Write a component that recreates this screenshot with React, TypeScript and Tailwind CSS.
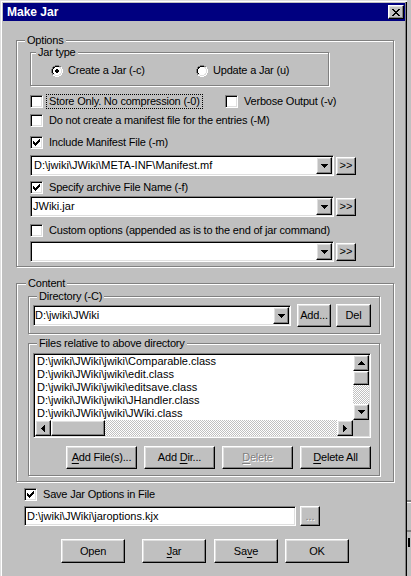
import React from "react";

type PixProps = { rows: string[]; colors: Record<string, string> };
function Pix({ rows, colors }: PixProps) {
  const h = rows.length;
  const w = rows[0].length;
  const rects: React.ReactNode[] = [];
  rows.forEach((r, y) => {
    r.split("").forEach((c, x) => {
      const fill = colors[c];
      if (fill) rects.push(<rect key={`${x}-${y}`} x={x} y={y} width={1} height={1} fill={fill} />);
    });
  });
  return (
    <svg width={w} height={h} viewBox={`0 0 ${w} ${h}`} shapeRendering="crispEdges" className="block shrink-0">
      {rects}
    </svg>
  );
}

const K = { X: "#000" };
const GRAYK = { X: "#808080" };
const CHECK = ["......X", ".....XX", "X...XXX", "XX.XXX.", "XXXXX..", ".XXX...", "..X...."];
const CLOSE = ["XX....XX", ".XX..XX.", "..XXXX..", "...XX...", "..XXXX..", ".XX..XX.", "XX....XX"];
const DOWN = ["XXXXXXX", ".XXXXX.", "..XXX..", "...X..."];
const UP = ["...X...", "..XXX..", ".XXXXX.", "XXXXXXX"];
const RIGHT = ["X...", "XX..", "XXX.", "XXXX", "XXX.", "XX..", "X..."];
const LEFT = ["...X", "..XX", ".XXX", "XXXX", ".XXX", "..XX", "...X"];
const RADIO_BASE = [
  "....DDDD....",
  "..DDBBBBDD..",
  ".DBBwwwwLLW.",
  ".DBwwwwwwLW.",
  "DBwwwwwwwwLW",
  "DBwwwwwwwwLW",
  "DBwwwwwwwwLW",
  "DBwwwwwwwwLW",
  ".DBwwwwwwLW.",
  ".DLLwwwwLLW.",
  "..WWLLLLWW..",
  "....WWWW....",
];
const RADIO_ON = RADIO_BASE.map((r, y) => {
  const a = r.split("");
  if (y === 4 || y === 7) {
    a[5] = "k";
    a[6] = "k";
  }
  if (y === 5 || y === 6) {
    a[4] = "k";
    a[5] = "k";
    a[6] = "k";
    a[7] = "k";
  }
  return a.join("");
});
const RADIO_COLORS = { D: "#808080", B: "#000", W: "#fff", L: "#dfdfdf", w: "#fff", k: "#000" };

const RAISED =
  "bg-[#c0c0c0] border border-t-white border-l-white border-r-black border-b-black shadow-[inset_-1px_-1px_0_#808080,inset_1px_1px_0_#dfdfdf]";
const SUNKEN =
  "bg-white border border-t-[#808080] border-l-[#808080] border-r-white border-b-white shadow-[inset_1px_1px_0_#000,inset_-1px_-1px_0_#dfdfdf]";
const ETCHED = "relative border border-[#808080] shadow-[inset_1px_1px_0_#fff,1px_1px_0_#fff]";
const DITHER =
  "bg-[image:repeating-conic-gradient(#c0c0c0_0%_25%,#ffffff_0%_50%)] bg-[length:2px_2px]";

function Btn({ className, children }: { className: string; children?: React.ReactNode }) {
  return <div className={`${RAISED} flex items-center justify-center shrink-0 ${className}`}>{children}</div>;
}

function Checkbox({ checked }: { checked?: boolean }) {
  return (
    <div className={`${SUNKEN} w-[13px] h-[13px] shrink-0 flex items-center justify-center`}>
      {checked && <Pix rows={CHECK} colors={K} />}
    </div>
  );
}

function CheckRow({
  checked,
  label,
  focus,
  className,
}: {
  checked?: boolean;
  label: string;
  focus?: boolean;
  className?: string;
}) {
  return (
    <div className={`flex items-center h-[13px] ${className ?? ""}`}>
      <Checkbox checked={checked} />
      <span
        className={`ml-[4px] px-[2px] leading-[13px] whitespace-nowrap ${
          focus ? "outline-1 outline-dotted outline-black" : ""
        }`}
      >
        {label}
      </span>
    </div>
  );
}

function Combo({ value, className, textPad }: { value: string; className: string; textPad: string }) {
  return (
    <div className={`${SUNKEN} h-[21px] p-[1px] flex items-center shrink-0 ${className}`}>
      <span className={`flex-1 whitespace-nowrap overflow-hidden tracking-normal leading-[13px] ${textPad}`}>
        {value}
      </span>
      <Btn className="w-[16px] h-[17px]">
        <Pix rows={DOWN} colors={K} />
      </Btn>
    </div>
  );
}

function Group({
  className,
  label,
  labelPos,
  children,
}: {
  className: string;
  label: string;
  labelPos: string;
  children?: React.ReactNode;
}) {
  return (
    <div className={`${ETCHED} flex flex-col shrink-0 ${className}`}>
      <span className={`absolute top-[-7px] px-[2px] bg-[#c0c0c0] leading-[13px] whitespace-nowrap ${labelPos}`}>
        {label}
      </span>
      {children}
    </div>
  );
}

function Radio({ on, label, className }: { on?: boolean; label: string; className: string }) {
  return (
    <div className={`flex items-center h-[13px] ${className}`}>
      <Pix rows={on ? RADIO_ON : RADIO_BASE} colors={RADIO_COLORS} />
      <span className="ml-[5px] leading-[13px] whitespace-nowrap">{label}</span>
    </div>
  );
}

const FILES = [
  "D:\\jwiki\\JWiki\\jwiki\\Comparable.class",
  "D:\\jwiki\\JWiki\\jwiki\\edit.class",
  "D:\\jwiki\\JWiki\\jwiki\\editsave.class",
  "D:\\jwiki\\JWiki\\jwiki\\JHandler.class",
  "D:\\jwiki\\JWiki\\jwiki\\JWiki.class",
];

export default function App() {
  return (
    <div className="w-[411px] h-[576px] overflow-hidden bg-[#c0c0c0] flex font-['Liberation_Sans',Arial,sans-serif] text-[11px] leading-[13px] text-black tracking-[-0.2px]">
      {/* window */}
      <div className="w-[407px] h-full shrink-0 flex flex-col pl-[3px] pt-[3px] pr-[2px] shadow-[inset_1px_1px_0_#dfdfdf,inset_2px_2px_0_#fff,inset_-1px_0_0_#000,inset_-2px_0_0_#808080]">
        {/* title bar */}
        <div className="h-[18px] shrink-0 bg-[#000080] flex items-center justify-between pl-[4px] pr-[1px]">
          <span className="text-white font-bold text-[12px] tracking-normal leading-[14px]">Make Jar</span>
          <Btn className="w-[16px] h-[14px]">
            <Pix rows={CLOSE} colors={K} />
          </Btn>
        </div>

        {/* client */}
        <div className="flex flex-col">
          {/* Options */}
          <Group className="mt-[19px] ml-[13px] w-[378px] h-[227px]" label="Options" labelPos="left-[8px]">
            <Group className="mt-[11px] ml-[13px] w-[299px] h-[34px]" label="Jar type" labelPos="left-[5px]">
              <div className="mt-[11px] flex">
                <Radio on label="Create a Jar (-c)" className="ml-[20px] w-[145px]" />
                <Radio label="Update a Jar (u)" className="" />
              </div>
            </Group>

            <div className="mt-[9px] ml-[13px] flex">
              <CheckRow label="Store Only. No compression (-0)" focus className="w-[195px]" />
              <CheckRow label="Verbose Output (-v)" />
            </div>
            <CheckRow className="mt-[6px] ml-[13px]" label="Do not create a manifest file for the entries (-M)" />
            <CheckRow className="mt-[9px] ml-[13px]" checked label="Include Manifest File (-m)" />
            <div className="mt-[6px] ml-[13px] flex items-center">
              <Combo className="w-[304px]" textPad="pl-[2px]" value={"D:\\jwiki\\JWiki\\META-INF\\Manifest.mf"} />
              <Btn className="ml-[2px] w-[20px] h-[18px]">
                <span className="tracking-normal leading-[13px]">&gt;&gt;</span>
              </Btn>
            </div>
            <CheckRow className="mt-[5px] ml-[13px]" checked label="Specify archive File Name (-f)" />
            <div className="mt-[2px] ml-[13px] flex items-center">
              <Combo className="w-[304px]" textPad="pl-[1px]" value="JWiki.jar" />
              <Btn className="ml-[2px] w-[20px] h-[18px]">
                <span className="tracking-normal leading-[13px]">&gt;&gt;</span>
              </Btn>
            </div>
            <CheckRow
              className="mt-[7px] ml-[13px]"
              label="Custom options (appended as is to the end of jar command)"
            />
            <div className="mt-[4px] ml-[13px] flex items-center">
              <Combo className="w-[304px]" textPad="pl-[2px]" value="" />
              <Btn className="ml-[2px] w-[20px] h-[18px]">
                <span className="tracking-normal leading-[13px]">&gt;&gt;</span>
              </Btn>
            </div>
          </Group>

          {/* Content */}
          <Group className="mt-[16px] ml-[13px] w-[378px] h-[199px]" label="Content" labelPos="left-[9px]">
            <Group className="mt-[12px] ml-[11px] w-[352px] h-[38px]" label="Directory (-C)" labelPos="left-[8px]">
              <div className="mt-[7px] ml-[4px] h-[23px] flex items-center">
                <Combo className="w-[258px]" textPad="pl-0" value={"D:\\jwiki\\JWiki"} />
                <Btn className="ml-[6px] w-[34px] h-[23px]">Add...</Btn>
                <Btn className="ml-[5px] w-[35px] h-[23px]">Del</Btn>
              </div>
            </Group>

            <Group
              className="mt-[9px] ml-[11px] w-[352px] h-[133px]"
              label="Files relative to above directory"
              labelPos="left-[8px]"
            >
              {/* list box */}
              <div className={`${SUNKEN} mt-[9px] ml-[4px] w-[338px] h-[85px] p-[1px] grid grid-cols-[1fr_16px] grid-rows-[1fr_16px]`}>
                <div className="flex flex-col overflow-hidden tracking-normal">
                  {FILES.map((f) => (
                    <div key={f} className="h-[13px] leading-[13px] pl-[2px] whitespace-nowrap">
                      {f}
                    </div>
                  ))}
                </div>
                <div className="flex flex-col">
                  <Btn className="w-[16px] h-[16px]">
                    <Pix rows={UP} colors={K} />
                  </Btn>
                  <Btn className="w-[16px] h-[14px]" />
                  <div className={`flex-1 ${DITHER}`} />
                  <Btn className="w-[16px] h-[16px]">
                    <Pix rows={DOWN} colors={K} />
                  </Btn>
                </div>
                <div className="flex">
                  <Btn className="w-[16px] h-[16px]">
                    <Pix rows={LEFT} colors={K} />
                  </Btn>
                  <Btn className="w-[54px] h-[16px]" />
                  <div className={`flex-1 ${DITHER}`} />
                  <Btn className="w-[16px] h-[16px]">
                    <Pix rows={RIGHT} colors={K} />
                  </Btn>
                </div>
                <div className="bg-[#c0c0c0]" />
              </div>

              <div className="mt-[8px] ml-[37px] flex gap-[7px]">
                <Btn className="w-[71px] h-[23px]">
                  <span className="whitespace-nowrap">
                    <span className="underline underline-offset-[2px]">A</span>dd File(s)...
                  </span>
                </Btn>
                <Btn className="w-[71px] h-[23px]">
                  <span className="whitespace-nowrap">
                    Add <span className="underline underline-offset-[2px]">D</span>ir...
                  </span>
                </Btn>
                <Btn className="w-[71px] h-[23px]">
                  <span className="whitespace-nowrap text-[#808080] [text-shadow:1px_1px_0_#fff]">
                    <span className="underline underline-offset-[2px]">D</span>elete
                  </span>
                </Btn>
                <Btn className="w-[71px] h-[23px]">
                  <span className="whitespace-nowrap">
                    <span className="underline underline-offset-[2px]">D</span>elete All
                  </span>
                </Btn>
              </div>
            </Group>
          </Group>

          {/* Save options */}
          <CheckRow className="mt-[6px] ml-[21px]" checked label="Save Jar Options in File" />
          <div className="mt-[5px] ml-[21px] flex">
            <div className={`${SUNKEN} w-[272px] h-[20px] p-[1px] flex items-center`}>
              <span className="pl-[1px] tracking-normal leading-[13px] whitespace-nowrap">
                {"D:\\jwiki\\JWiki\\jaroptions.kjx"}
              </span>
            </div>
            <Btn className="ml-[4px] w-[20px] h-[20px]">
              <span className="text-[#808080] [text-shadow:1px_1px_0_#fff] tracking-normal leading-[13px]">...</span>
            </Btn>
          </div>

          {/* bottom buttons */}
          <div className="mt-[13px] flex">
            <Btn className="ml-[58px] w-[64px] h-[24px]">Open</Btn>
            <Btn className="ml-[17px] w-[64px] h-[24px]">
              <span>
                <span className="underline underline-offset-[2px]">J</span>ar
              </span>
            </Btn>
            <Btn className="ml-[8px] w-[64px] h-[24px]">
              <span>
                Sa<span className="underline underline-offset-[2px]">v</span>e
              </span>
            </Btn>
            <Btn className="ml-[7px] w-[64px] h-[24px]">OK</Btn>
          </div>
        </div>
      </div>

      {/* background behind window */}
      <div className="flex-1 flex flex-col">
        <div className="h-[500px] shrink-0" />
        <div className="h-[2px] bg-[#808080]" />
        <div className="h-[1px] bg-white" />
        <div className="h-[27px] shrink-0" />
        <div className="h-[2px] bg-[#808080]" />
        <div className="h-[6px] shrink-0" />
        <div className="h-[9px] w-[2px] ml-[1px] bg-black" />
      </div>
    </div>
  );
}
